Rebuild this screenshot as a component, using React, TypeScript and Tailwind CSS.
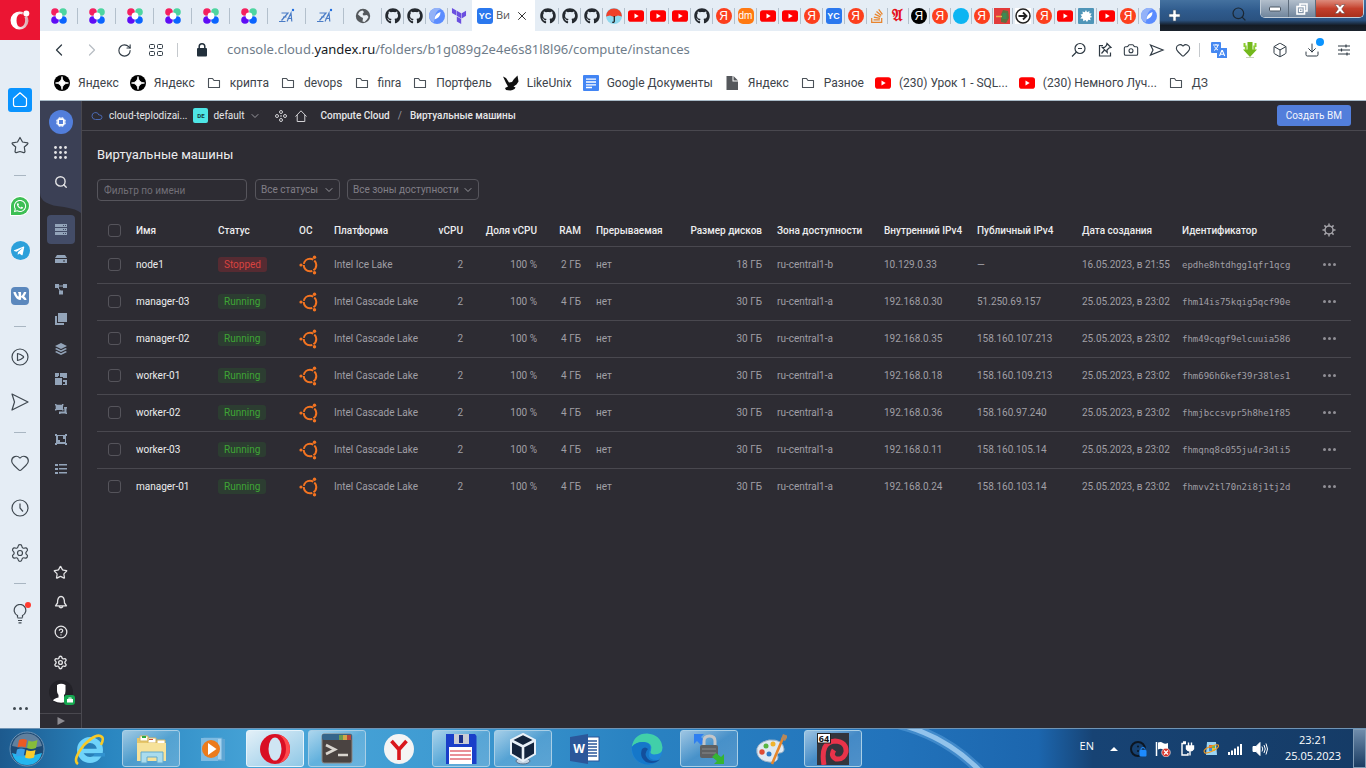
import { type ReactNode } from "react";
import {
  Box,
  Camera,
  ChevronDown,
  ChevronLeft,
  ChevronRight,
  CircleHelp,
  Cloud,
  Download,
  Heart,
  RotateCw,
  Search,
  Settings,
  Star,
  X,
} from "lucide-react";
import { FaGithub, FaStackOverflow, FaTelegramPlane, FaVk, FaWhatsapp } from "react-icons/fa";
import { SiTerraform } from "react-icons/si";

/* ---------- favicons ---------- */

function Clover() {
  return (
    <svg viewBox="0 0 16 16" className="size-4">
      <circle cx="4" cy="4" r="3.8" fill="#f5205f" />
      <circle cx="12" cy="4" r="3.8" fill="#4dd5a0" />
      <circle cx="4" cy="12" r="3.8" fill="#5f0df5" />
      <circle cx="12" cy="12" r="3.8" fill="#0a64ff" />
      <circle cx="8" cy="8" r="3.4" fill="#fff" />
    </svg>
  );
}

function LinesMark() {
  return (
    <svg viewBox="0 0 16 16" className="size-4" fill="none" stroke="#4a7cc6" strokeWidth="1.2">
      <path d="M2.500 5H9L2.500 12.500M0 13.500h6.500M4 9h3.500M8 13.500 12 5l.8 8.500M8.500 10.500h4" />
      <circle cx="14" cy="2" r="1.200" fill="#1f6de0" stroke="none" />
    </svg>
  );
}

function Globe() {
  return (
    <svg viewBox="0 0 16 16" className="size-4">
      <circle cx="8" cy="8" r="7.200" fill="#55595d" />
      <path d="M3 6.500Q4 3 7.500 2.500L9 4 7.500 6l1 1.500 3.500-.5 1.500 2-1.500 2.500-2.500 2.500-2-.5.500-3.500-2-1z" fill="#e9eef3" />
      <path d="M9.500 3.500 12 5l-1 1.200-1.700-.2z" fill="#55595d" />
    </svg>
  );
}

function PlayTube() {
  return (
    <svg viewBox="0 0 16 16" className="size-4">
      <rect y="2.300" width="16" height="11.400" rx="2.800" fill="#f00" />
      <path d="M6.500 5.600v4.800L10.700 8z" fill="#fff" />
    </svg>
  );
}

function YaCircle({ dark = false }: { dark?: boolean }) {
  return (
    <span className={`flex size-4 items-center justify-center rounded-full font-['Liberation_Sans',sans-serif] text-[12px] leading-4 text-white ${dark ? "bg-black" : "bg-[#fc3f1d]"}`}>
      Я
    </span>
  );
}

function YcSquare() {
  return (
    <span className="flex size-4 shrink-0 items-center justify-center rounded-[3px] bg-[#2b78ee] font-['Liberation_Sans',sans-serif] text-[9px] leading-4 font-bold text-white">
      YC
    </span>
  );
}

function Umbrella() {
  return (
    <svg viewBox="0 0 16 16" className="size-4">
      <circle cx="8" cy="8" r="8" fill="#8fd8ee" />
      <path d="M0 8.500a8 8 0 0 1 16 0l-4-1-4 1.500-4-1.500z" fill="#f0402a" />
      <path d="M8.300 8v5.200q-.2 1.600-2 1" stroke="#222" strokeWidth="1.300" fill="none" />
    </svg>
  );
}

function DmMark() {
  return (
    <span className="flex size-4 items-center justify-center rounded-[5px] bg-[#ff7a12] font-['Liberation_Sans',sans-serif] text-[10px] leading-4 text-white">dm</span>
  );
}

function BluePlanet() {
  return (
    <svg viewBox="0 0 16 16" className="size-4">
      <circle cx="8" cy="8" r="8" fill="#5a8cff" />
      <path d="M0 8a8 8 0 0 1 12-7Q5 3 5 14.500 0 12 0 8z" fill="#93b2f8" />
      <path d="M11.500 4Q11.500 9.500 5.500 11.500 5.500 6 11.500 4z" fill="#fff" />
    </svg>
  );
}

function Potion() {
  return (
    <svg viewBox="0 0 16 16" className="size-4">
      <rect width="16" height="16" fill="#e23b3b" />
      <path d="M7 6.500 9 2l5 1 1 7-3 5-5-1V10z" fill="#5f7040" />
      <path d="M8.500 5h4v6h-4z" fill="#3c8a55" />
      <path d="M2 8.500h6" stroke="#e8b34a" strokeWidth="1.500" />
    </svg>
  );
}

function ArrowDisc() {
  return (
    <svg viewBox="0 0 16 16" className="size-4" fill="none">
      <rect width="16" height="16" fill="#fff" />
      <circle cx="8" cy="8" r="7" stroke="#222" strokeWidth="1.500" />
      <path d="M3.500 8h8M8 4.500 11.500 8 8 11.500" stroke="#222" strokeWidth="1.800" />
    </svg>
  );
}

function Splash() {
  return (
    <svg viewBox="0 0 16 16" className="size-4">
      <rect width="16" height="16" rx="1" fill="#4f95b8" />
      <path d="m8 2 1 2.200L11.500 3l-.3 2.300 2.500.2-1.500 2 2 1.500-2.300.8.800 2.400-2.400-.4L9 14l-1.500-2-2.200 1.200L5 10.800l-2.800-.2L4 8.500 2.500 6.500l2.300-.5L4.500 3.500l2.300.8z" fill="#fff" />
    </svg>
  );
}

function Github() {
  return <FaGithub className="size-4 text-[#24292f]" />;
}

const pinnedWide: ReactNode[] = [
  <Clover />, <Clover />, <Clover />, <Clover />, <Clover />, <Clover />, <LinesMark />, <LinesMark />, <Globe />,
];

const pinnedNarrow: ReactNode[] = [
  <Github />, <Github />, <BluePlanet />, <SiTerraform className="size-4 text-[#6a4fe0]" />,
];

const openTabs: ReactNode[] = [
  <Github />, <Github />, <Github />, <Umbrella />, <PlayTube />, <PlayTube />, <PlayTube />, <Github />, <YaCircle />,
  <DmMark />, <PlayTube />, <PlayTube />, <YaCircle />, <YcSquare />, <YaCircle />,
  <FaStackOverflow className="size-4 text-[#e8842c]" />,
  <span className="font-['Liberation_Serif',serif] text-[16px] leading-4 font-bold text-[#e5101c]">𝔄</span>,
  <YaCircle dark />, <YaCircle />,
  <span className="block size-4 rounded-full bg-[#0cb5f2]" />,
  <YaCircle />, <Potion />, <ArrowDisc />, <YaCircle />, <PlayTube />, <Splash />, <PlayTube />, <YaCircle />, <BluePlanet />,
];

function TabStrip() {
  return (
    <div className="flex h-[31px] bg-[#e5edf5]">
      <div className="flex shrink-0 pt-px">
        {pinnedWide.map((icon, i) => (
          <button key={i} aria-label="Вкладка" className="flex w-[38px] items-center justify-center">
            <span className="flex h-4 w-full items-center justify-center border-r border-[#b3c0cc]">{icon}</span>
          </button>
        ))}
        {pinnedNarrow.map((icon, i) => (
          <button key={i} aria-label="Вкладка" className="flex w-[22px] items-center justify-center">
            <span className={`flex h-4 w-full items-center justify-center border-[#b3c0cc] ${i < 3 ? "border-r" : ""}`}>{icon}</span>
          </button>
        ))}
      </div>
      <div className="ml-0.5 flex w-[63px] shrink-0 items-center bg-white pl-[5px] text-[11px]">
        <YcSquare />
        <span className="ml-[3px] whitespace-nowrap text-[#555]">Ви</span>
        <button aria-label="Закрыть вкладку" className="mr-1.5 ml-auto">
          <X className="size-3.5 text-[#222]" strokeWidth={1.6} />
        </button>
      </div>
      <div className="ml-0.5 flex flex-1 pt-px">
        {openTabs.map((icon, i) => (
          <button key={i} aria-label="Вкладка" className={`flex items-center justify-center ${i < 15 ? "w-[22px] shrink-0" : "min-w-0 flex-1"}`}>
            <span className="flex h-4 w-full items-center justify-center border-r border-[#b3c0cc]">{icon}</span>
          </button>
        ))}
      </div>
      <div className="flex w-[206px] shrink-0 items-start bg-[linear-gradient(to_bottom,#44719f_0%,#2f5b8d_35%,#2b5280_65%,#141b24_82%,#1a222c_100%)]">
        <button aria-label="Новая вкладка" className="mt-[9px] ml-2 text-white">
          <svg viewBox="0 0 13 13" className="size-[13px]">
            <path d="M5 1h3v4h4v3H8v4H5V8H1V5h4z" fill="#fff" stroke="#4b5b6c" strokeWidth=".6" />
          </svg>
        </button>
        <button aria-label="Поиск вкладок" className="mt-1.5 ml-[50px]">
          <Search className="size-4 text-[#1b2733]" strokeWidth={1.8} />
        </button>
        <div className="ml-[13px] flex h-[18px] overflow-hidden rounded-b-[5px] border border-t-0 border-[#c3ced9]">
          <button aria-label="Свернуть" className="flex w-7 items-center justify-center border-r border-[#5d6c7c] bg-linear-to-b from-[#b3bfcc] to-[#71869d]">
            <svg viewBox="0 0 12 6" className="h-1.5 w-3"><rect x=".5" y="1" width="11" height="4" rx="1" fill="#fff" stroke="#4b5663" /></svg>
          </button>
          <button aria-label="Свернуть в окно" className="flex w-[27px] items-center justify-center border-r border-[#5d6c7c] bg-linear-to-b from-[#b3bfcc] to-[#71869d]">
            <svg viewBox="0 0 12 12" className="size-3" fill="none" stroke="#fff" strokeWidth="1.600"><path d="M4 3V1h7v7H9" /><rect x="1" y="3.500" width="7.500" height="7.500" /><rect x="3.500" y="6" width="2.500" height="2.500" strokeWidth="1" /></svg>
          </button>
          <button aria-label="Закрыть" className="flex w-[47px] items-center justify-center bg-linear-to-b from-[#dd8b7c] via-[#c4402c] to-[#a8301c]">
            <svg viewBox="0 0 12 10" className="h-2.5 w-3"><path d="M1 .5h3l2 2.300L8 .5h3L7.700 5 11 9.500H8L6 7.200 4 9.500H1L4.300 5z" fill="#fff" stroke="#5b3a3a" strokeWidth=".5" /></svg>
          </button>
        </div>
      </div>
    </div>
  );
}

function AddressBar() {
  const tool = "flex items-center justify-center";
  return (
    <div className="flex h-[38px] items-center bg-white text-[#2f3a44]">
      <button aria-label="Назад" className={`w-[38px] ${tool}`}><ChevronLeft className="size-5" strokeWidth={1.5} /></button>
      <button aria-label="Вперёд" className={`w-7 ${tool} text-[#b8bec4]`}><ChevronRight className="size-5" strokeWidth={1.5} /></button>
      <button aria-label="Обновить" className={`w-9 ${tool}`}><RotateCw className="size-[15px]" strokeWidth={1.8} /></button>
      <button aria-label="Экспресс-панель" className={`w-7 ${tool}`}>
        <svg viewBox="0 0 14 12" className="h-3 w-3.5" fill="none" stroke="currentColor"><rect x=".5" y=".5" width="5" height="4" rx="1" /><rect x="8.500" y=".5" width="5" height="4" rx="1" /><rect x=".5" y="7.500" width="5" height="4" rx="1" /><rect x="8.500" y="7.500" width="5" height="4" rx="1" /></svg>
      </button>
      <span className="ml-[7px] h-3.5 w-px bg-[#c5c9cd]" />
      <svg viewBox="0 0 10 14" className="ml-[19px] h-3.5 w-2.5"><rect y="5" width="10" height="8.500" rx="1" fill="#22303c" /><path d="M2.200 5.500V3.600a2.800 2.800 0 0 1 5.600 0v1.900" fill="none" stroke="#22303c" strokeWidth="1.500" /></svg>
      <div className="ml-5 flex-1 truncate font-['Noto_Sans',sans-serif] text-[13px] text-[#6f7d8a]">
        console.cloud.<span className="text-[#15191d]">yandex.ru</span>/folders/b1g089g2e4e6s81l8l96/compute/instances
      </div>
      <button aria-label="Масштаб" className={`w-[26px] ${tool}`}>
        <svg viewBox="0 0 16 16" className="size-4" fill="none" stroke="currentColor" strokeWidth="1.200"><circle cx="9" cy="6.500" r="5" /><path d="M7 6.500h4M5.500 10 1 14.500" /></svg>
      </button>
      <button aria-label="Закрепить" className={`w-[26px] ${tool}`}>
        <svg viewBox="0 0 16 16" className="size-4" fill="none" stroke="currentColor" strokeWidth="1.200"><path d="M6 3.500H2.500v10.500h11V10.500M10 1.500l4 4-2 .5-2 2 .2 2.300-5-5L7.500 5.500l2-2zM7.500 8 4.500 11.500" /></svg>
      </button>
      <button aria-label="Снимок" className={`w-[26px] ${tool}`}><Camera className="size-4" strokeWidth={1.6} /></button>
      <button aria-label="Мой поток" className={`w-[26px] ${tool}`}>
        <svg viewBox="0 0 16 16" className="size-4" fill="none" stroke="currentColor" strokeWidth="1.200"><path d="m1.500 3 12.500 5-12.500 5L4 8z" /></svg>
      </button>
      <button aria-label="В избранное" className={`w-[26px] ${tool}`}><Heart className="size-4" strokeWidth={1.6} /></button>
      <span className="ml-[3px] h-3.5 w-px bg-[#c5c9cd]" />
      <button aria-label="Перевести" className={`ml-[3px] w-[31px] ${tool}`}>
        <svg viewBox="0 0 16 16" className="size-4"><rect width="10" height="11" rx="1" fill="#4688f1" /><rect x="6" y="6" width="10" height="10" fill="#4688f1" /><path d="M2 3h6M5 2v1M3 8.500Q6.500 6.500 7 3M3.500 4.500Q4.500 7 7 8" stroke="#fff" strokeWidth="1" fill="none" /><path d="m8.500 14 2.300-5.500h.6L13.700 14M9.300 12.200h3.500" stroke="#fff" strokeWidth="1.100" fill="none" /></svg>
      </button>
      <button aria-label="Загрузчик" className={`w-[31px] ${tool}`}>
        <svg viewBox="0 0 16 16" className="size-4"><path d="M5.500 0h5v7.500h4.500L8 15 1 7.500h4.500z" fill="#73b81c" /><path d="M1.500 1h2v2.500h1.200V8H2.800V5H1.500zM14.500 1h-2v2.500h-1.200V8h1.900V5h1.300z" fill="#8ccc30" /><path d="M4 15.500h8" stroke="#c9d2bd" /></svg>
      </button>
      <button aria-label="Расширения" className={`w-[30px] ${tool}`}><Box className="size-4" strokeWidth={1.5} /></button>
      <button aria-label="Загрузки" className={`relative w-[34px] ${tool}`}>
        <Download className="size-4" strokeWidth={1.5} />
        <span className="absolute -top-1 right-[5px] size-2 rounded-full bg-[#0a94ff]" />
      </button>
      <button aria-label="Простая настройка" className={`mr-[7px] w-[30px] ${tool}`}>
        <svg viewBox="0 0 14 14" className="size-3.5" fill="none" stroke="currentColor" strokeWidth="1.200"><path d="M1 3h12M1 7h12M1 11h12M9 1.500v3M4.500 5.500v3M10 9.500v3" /></svg>
      </button>
    </div>
  );
}

function Spark() {
  return (
    <svg viewBox="0 0 16 16" className="size-4"><circle cx="8" cy="8" r="8" fill="#000" /><path d="M8 1.500Q8.400 7.600 14.500 8 8.400 8.400 8 14.500 7.600 8.400 1.500 8 7.600 7.600 8 1.500z" fill="#fff" stroke="#fff" strokeWidth=".8" /></svg>
  );
}

const folderIcon = (
  <svg viewBox="0 0 16 16" className="size-4" fill="none" stroke="#4a5158" strokeWidth="1.100"><path d="M2.500 3.500h4l1.500 2h5.500v7h-11z" strokeLinejoin="round" /></svg>
);

const bookmarks: { icon: ReactNode; label: string }[] = [
  { icon: <Spark />, label: "Яндекс" },
  { icon: <Spark />, label: "Яндекс" },
  { icon: folderIcon, label: "крипта" },
  { icon: folderIcon, label: "devops" },
  { icon: folderIcon, label: "finra" },
  { icon: folderIcon, label: "Портфель" },
  {
    icon: <svg viewBox="0 0 16 16" className="size-4"><path d="M0 1.500 3 3l3 4.500L9 7l2-3 3.500-3.500.5 3 .5 3-2 3-3 2 2 1-1 1.500L9.500 15l-2 .5L3 15l-1-2 3-1.500-2-3.500z" fill="#111" /></svg>,
    label: "LikeUnix",
  },
  {
    icon: <svg viewBox="0 0 16 16" className="size-4"><rect width="16" height="16" rx="1" fill="#4285f4" /><path d="M3 4.200h10M3 7h10M3 9.800h10M3 12.500h6" stroke="#fff" strokeWidth="1.300" /></svg>,
    label: "Google Документы",
  },
  {
    icon: <svg viewBox="0 0 16 16" className="size-4"><path d="M2.500 1h6v5.500H14V15H2.500zM9.500 1 14 5.500H9.500z" fill="#55585c" /></svg>,
    label: "Яндекс",
  },
  { icon: folderIcon, label: "Разное" },
  { icon: <PlayTube />, label: "(230) Урок 1 - SQL..." },
  { icon: <PlayTube />, label: "(230) Немного Луч..." },
  { icon: folderIcon, label: "ДЗ" },
];

function BookmarksBar() {
  return (
    <nav className="flex h-8 items-center gap-[11px] overflow-hidden border-b border-[#a9bbc8] bg-white pb-1 pl-3.5 font-['Roboto',sans-serif] text-[12px] whitespace-nowrap text-[#3d444b]">
      {bookmarks.map((b, i) => (
        <a key={i} href="#" className="flex shrink-0 items-center gap-2">
          {b.icon}
          {b.label}
        </a>
      ))}
    </nav>
  );
}

/* ---------- browser side rail ---------- */

function RailItem({ label, children }: { label: string; children: ReactNode }) {
  return (
    <button aria-label={label} className="flex h-[45px] w-10 shrink-0 items-center justify-center">
      {children}
    </button>
  );
}

function RailDivider() {
  return (
    <div className="flex h-4 w-10 shrink-0 items-center justify-center">
      <span className="h-px w-3 bg-[#a9b6c2]" />
    </div>
  );
}

function BrowserRail() {
  return (
    <aside className="flex w-10 shrink-0 flex-col bg-[#e5edf5] text-[#3f4850]">
      <button aria-label="Меню" className="mb-[37px] flex size-10 shrink-0 items-center justify-center bg-[#eb1533]">
        <svg viewBox="0 0 20 20" className="size-5">
          <defs>
            <linearGradient id="ring" x1="0" y1="0" x2="1" y2="0">
              <stop offset=".35" stopColor="#fff" />
              <stop offset="1" stopColor="#d8a3aa" />
            </linearGradient>
          </defs>
          <path d="M9.500 1.500a9 9 0 1 0 9 9.500q0-3-1.500-5l-2.500 1q1 1.500.5 5-1 4.500-4.500 5-4-.5-4-6.500t4-6.500l2 .5.500-2.500q-1.500-.5-3.500-.5z" fill="url(#ring)" />
          <circle cx="16.300" cy="3.500" r="3" fill="#fff" />
        </svg>
      </button>
      <RailItem label="Главная">
        <span className="flex size-6 items-center justify-center rounded-[3px] bg-[#0a94ff]">
          <svg viewBox="0 0 16 16" className="size-4" fill="none" stroke="#fff" strokeWidth="1.200" strokeLinejoin="round"><path d="M8 .8 14.500 6.500v6q0 2-2 2h-9q-2 0-2-2v-6z" /></svg>
        </span>
      </RailItem>
      <RailItem label="Закладки">
        <svg viewBox="0 0 18 18" className="size-[18px]" fill="none" stroke="currentColor" strokeWidth="1.200" strokeLinejoin="round"><path d="M9 1.500 11.500 6l5 .8q.8.6 0 1.400L13.300 11l.7 4.800q-.5 1-1.300.8L9 15.500l-3.700 1.100q-.8.200-1.300-.8L4.700 11 1.500 8.200q-.8-.8 0-1.400l5-.8z" /></svg>
      </RailItem>
      <RailDivider />
      <RailItem label="WhatsApp">
        <span className="flex size-[18px] items-center justify-center rounded-full rounded-bl-[3px] bg-[#3dbf55] ring-1 ring-white"><FaWhatsapp className="size-3.5 text-white" /></span>
      </RailItem>
      <RailItem label="Telegram">
        <span className="flex size-[19px] items-center justify-center rounded-full bg-[#2ca0da]"><FaTelegramPlane className="mr-0.5 size-3 text-white" /></span>
      </RailItem>
      <RailItem label="ВКонтакте">
        <span className="flex size-[18px] items-center justify-center rounded-[4px] bg-[#5b88bd]"><FaVk className="size-3.5 text-white" /></span>
      </RailItem>
      <RailDivider />
      <RailItem label="Плеер">
        <svg viewBox="0 0 18 18" className="size-[18px]" fill="none" stroke="currentColor" strokeWidth="1.200" strokeLinejoin="round"><circle cx="9" cy="9" r="8" /><path d="M6.500 5.500v7q3-.5 6-3v-1q-3-2.500-6-3z" /></svg>
      </RailItem>
      <RailItem label="Мой поток">
        <svg viewBox="0 0 18 18" className="size-[18px]" fill="none" stroke="currentColor" strokeWidth="1.200" strokeLinejoin="round"><path d="m1 1 16 8-16 8 2.500-8z" /></svg>
      </RailItem>
      <RailDivider />
      <RailItem label="Избранное"><Heart className="size-5" strokeWidth={1.4} /></RailItem>
      <RailItem label="История">
        <svg viewBox="0 0 18 18" className="size-[18px]" fill="none" stroke="currentColor" strokeWidth="1.200"><circle cx="9" cy="9" r="8" /><path d="M9 4.500V9l3 3.500" /></svg>
      </RailItem>
      <RailItem label="Настройки"><Settings className="size-5" strokeWidth={1.4} /></RailItem>
      <RailDivider />
      <RailItem label="Советы">
        <span className="relative">
          <svg viewBox="0 0 16 20" className="h-5 w-4" fill="none" stroke="currentColor" strokeWidth="1.200"><path d="M5.500 13.500v-2A5.800 5.800 0 1 1 10.500 11.500v2M5.500 14h5M6 16.500h4M6.500 18.800h3" /></svg>
          <span className="absolute -top-0.5 -right-[3px] size-1.5 rounded-full bg-[#ff3b30]" />
        </span>
      </RailItem>
      <button aria-label="Ещё" className="mt-auto flex h-10 items-center justify-center gap-[3px]">
        <span className="size-[3px] rounded-full bg-[#3f4850]" />
        <span className="size-[3px] rounded-full bg-[#3f4850]" />
        <span className="size-[3px] rounded-full bg-[#3f4850]" />
      </button>
    </aside>
  );
}

/* ---------- console sidebar ---------- */

const services: { label: string; art: ReactNode }[] = [
  { label: "Виртуальные машины", art: <path d="M0 1h12v3H0zM0 5h12v3H0zM0 9h12v3H0zM8 2h1v1H8zM10 2h1v1h-1zM8 6h1v1H8zM10 6h1v1h-1zM8 10h1v1H8zM10 10h1v1h-1z" fillRule="evenodd" /> },
  { label: "Диски", art: <path d="M2 2h8l2 3H0zM0 6h12v4H0zM8 7.500v1h2v-1z" fillRule="evenodd" /> },
  { label: "Группы", art: <><path d="M0 1h4v4H0zM8 1h4v4H8zM4 7.500h4v4H4z" /><path d="M3 3h6M2.500 4 6 9" stroke="currentColor" fill="none" /></> },
  { label: "Образы", art: <path d="M3 0h9v9H3zM0 3h2v7h7v2H0z" /> },
  { label: "Снимки", art: <path d="m6 0 6 3-6 3-6-3zM1.500 5 6 7.200 10.500 5l1.500 1-6 3-6-3zM1.500 8 6 10.200 10.500 8l1.500 1-6 3-6-3z" /> },
  { label: "Группы размещения", art: <path d="M0 0h4v3H3v1H0zM5 0h7v5H8V4H5zM0 5h7v7H0zM8 7h4v5H8v-1h2V9H8z" /> },
  { label: "Пулы", art: <path d="M0 1h1.500v.7H7V1h1.500v1.500H8V6h.5v1.500H7V7H1.500v.5H0V6h.7V2.500H0zM9 4h3v1.500h-.5v4h.5V11h-1.500v-.5h-5V11H4V8.500h5.500z" /> },
  { label: "Файловые хранилища", art: <path d="M0 1h2v1h8V1h2v2h-1v7h1v2h-2v-1H2v1H0v-2h1V3H0zM3 3v4h2v2h5V6H8V3z" fillRule="evenodd" /> },
  { label: "Операции", art: <path d="M0 1h3v2H0zM4 1h8v1.500H4zM0 5h3v2H0zM4 5h8v1.500H4zM0 9h3v2H0zM4 9h8v1.500H4z" /> },
];

function ConsoleSidebar() {
  const slot = "flex h-[30px] w-full shrink-0 items-center justify-center";
  return (
    <aside className="relative flex w-[42px] shrink-0 flex-col items-center border-r border-[#49484f] bg-[#2d2c33] pt-1.5 text-[#e4e4e6]">
      <svg viewBox="0 0 41 112" className="absolute top-0 left-0 h-28 w-[41px]" aria-hidden="true">
        <path d="M0 0h41v112Q37 108 24 106 0 104 0 92z" fill="#3b4055" />
      </svg>
      <a href="#" aria-label="Compute Cloud" className={`relative ${slot}`}>
        <span className="flex size-6 items-center justify-center rounded-full bg-[#527edb]">
          <svg viewBox="0 0 12 12" className="size-3" fill="none" stroke="#fff"><rect x="3.200" y="3.200" width="5.600" height="5.600" rx=".8" strokeWidth="1.700" /><path d="M4.300 1v2M6 1v2M7.700 1v2M4.300 9v2M6 9v2M7.700 9v2M1 4.300h2M1 6h2M1 7.700h2M9 4.300h2M9 6h2M9 7.700h2" strokeWidth=".8" /></svg>
        </span>
      </a>
      <button aria-label="Все сервисы" className={`relative ${slot}`}>
        <svg viewBox="0 0 13 13" className="size-[13px]" fill="currentColor">
          {[1.5, 6.5, 11.5].map((y) => [1.5, 6.5, 11.5].map((x) => <circle key={`${x}-${y}`} cx={x} cy={y} r="1.400" />))}
        </svg>
      </button>
      <button aria-label="Поиск" className={`relative ${slot}`}><Search className="size-3.5" strokeWidth={2.4} /></button>
      <nav className="mt-[17px] flex w-full flex-col items-center text-[#93a4b9]">
        {services.map((s, i) => (
          <a key={s.label} href="#" aria-label={s.label} className={slot}>
            <span className={`flex h-[29px] w-7 items-center justify-center rounded-[4px] ${i === 0 ? "bg-[#434c67]" : ""}`}>
              <svg viewBox="0 0 12 12" className="size-3" fill="currentColor">{s.art}</svg>
            </span>
          </a>
        ))}
      </nav>
      <div className="mt-auto flex w-full flex-col items-center pb-[6px]">
        <button aria-label="Избранное" className={slot}><Star className="size-[15px]" strokeWidth={2} /></button>
        <button aria-label="Уведомления" className={slot}>
          <svg viewBox="0 0 14 14" className="size-3.5" fill="none" stroke="currentColor" strokeWidth="1.300" strokeLinejoin="round"><path d="M1.500 10.800 3.500 8q0-6.500 3.500-6.500T10.500 8l2 2.800zM5 11.500q2 2.500 4 0" /></svg>
        </button>
        <button aria-label="Помощь" className={slot}><CircleHelp className="size-3.5" strokeWidth={2.2} /></button>
        <button aria-label="Настройки" className={slot}><Settings className="size-[15px]" strokeWidth={2.2} /></button>
        <button aria-label="Профиль" className={`relative ${slot}`}>
          <svg viewBox="0 0 24 24" className="size-6"><circle cx="12" cy="12" r="12" fill="#232228" /><path d="M8 5q4-2.500 8.500 0v6q0 3-1.500 4v2.500q4 1 3.500 3Q13 25 4 20.500q1-2 5.500-3V15Q8 13 8 11z" fill="#fff" /></svg>
          <span className="absolute right-[6px] bottom-[2px] flex h-[10px] w-[11px] items-center justify-center rounded-[3px] bg-[#15a850]">
            <svg viewBox="0 0 6 6" className="size-1.5" fill="#fff"><path d="M0 2h6v3.500H0zM1.500.5h3V2h-1v-.7h-1V2h-1z" /></svg>
          </span>
        </button>
      </div>
      <button aria-label="Развернуть меню" className="flex h-[15px] w-full shrink-0 items-center justify-center border-t border-[#49484f]">
        <svg viewBox="0 0 8 8" className="size-2"><path d="M.5 0 8 4 .5 8z" fill="#8d8c92" /></svg>
      </button>
    </aside>
  );
}

/* ---------- console page ---------- */

function ConsoleHeader() {
  return (
    <header className="flex h-[30px] items-center border-b border-[#49484f] pr-[15px] pl-[9px] text-[10px] text-[#e6e6e8]">
      <Cloud className="size-3 shrink-0 text-[#4a68b0]" strokeWidth={2} />
      <a href="#" className="ml-1.5 whitespace-nowrap">cloud-teplodizai...</a>
      <span className="ml-1.5 flex size-[15px] items-center justify-center rounded-[2px] bg-[#4ee6e6] text-[6px] font-bold text-[#153a3c]">DE</span>
      <button className="ml-[5px] flex items-center gap-1">
        default
        <ChevronDown className="size-3 text-[#a3a3a8]" strokeWidth={1.8} />
      </button>
      <svg viewBox="0 0 12 12" className="ml-[14px] size-3" fill="none" stroke="#d2d2d5" strokeWidth="1"><circle cx="6" cy="2" r="1.500" /><circle cx="2" cy="6" r="1.500" /><circle cx="10" cy="6" r="1.500" /><circle cx="6" cy="10" r="1.500" /><path d="M5 6h2" /></svg>
      <a href="#" aria-label="Каталог" className="ml-2">
        <svg viewBox="0 0 12 12" className="size-3" fill="none" stroke="#d2d2d5"><path d="M.5 6.500 6 .8l5.500 5.700M2.200 5v6.500h7.600V5" /></svg>
      </a>
      <a href="#" className="ml-3.5 font-medium">Compute Cloud</a>
      <span className="mx-2 text-[#9c9ba1]">/</span>
      <span className="font-medium">Виртуальные машины</span>
      <button className="ml-auto h-[21px] rounded-[3px] bg-[#527edb] px-[9px] text-[#f2f5fc]">Создать ВМ</button>
    </header>
  );
}

function FilterSelect({ id, label, className }: { id: string; label: string; className: string }) {
  return (
    <div className={`relative ${className}`}>
      <select id={id} aria-label={label} className="h-[21px] w-full appearance-none rounded-[4px] border border-[#56555c] bg-transparent pl-[5px] text-[#817f87]">
        <option>{label}</option>
      </select>
      <ChevronDown className="pointer-events-none absolute top-[5px] right-[5px] size-3 text-[#a3a3a8]" strokeWidth={1.8} />
    </div>
  );
}

type Vm = {
  name: string;
  running: boolean;
  platform: string;
  ram: string;
  disk: string;
  zone: string;
  local: string;
  pub: string;
  created: string;
  id: string;
};

const base = { running: true, platform: "Intel Cascade Lake", ram: "4 ГБ", disk: "30 ГБ", zone: "ru-central1-a", created: "25.05.2023, в 23:02" };

const vms: Vm[] = [
  { name: "node1", running: false, platform: "Intel Ice Lake", ram: "2 ГБ", disk: "18 ГБ", zone: "ru-central1-b", local: "10.129.0.33", pub: "—", created: "16.05.2023, в 21:55", id: "epdhe8htdhgg1qfr1qcg" },
  { ...base, name: "manager-03", local: "192.168.0.30", pub: "51.250.69.157", id: "fhm14is75kqig5qcf90e" },
  { ...base, name: "manager-02", local: "192.168.0.35", pub: "158.160.107.213", id: "fhm49cqgf9elcuuia586" },
  { ...base, name: "worker-01", local: "192.168.0.18", pub: "158.160.109.213", id: "fhm696h6kef39r38les1" },
  { ...base, name: "worker-02", local: "192.168.0.36", pub: "158.160.97.240", id: "fhmjbccsvpr5h8he1f85" },
  { ...base, name: "worker-03", local: "192.168.0.11", pub: "158.160.105.14", id: "fhmqnq8c055ju4r3dli5" },
  { ...base, name: "manager-01", local: "192.168.0.24", pub: "158.160.103.14", id: "fhmvv2tl70n2i8j1tj2d" },
];

function UbuntuMark() {
  return (
    <svg viewBox="0 0 20 20" className="size-5" role="img" aria-label="Ubuntu">
      <circle cx="11" cy="10" r="6.300" fill="none" stroke="#f47421" strokeWidth="2" strokeDasharray="12 1.195" strokeDashoffset="-7.200" />
      <circle cx="2" cy="10" r="1.600" fill="#f47421" />
      <circle cx="15.500" cy="2.200" r="1.700" fill="#f47421" />
      <circle cx="15.500" cy="17.800" r="1.700" fill="#f47421" />
    </svg>
  );
}

function Tick({ label }: { label: string }) {
  return <input type="checkbox" aria-label={label} className="ml-1 block size-[13px] appearance-none rounded-[3px] border border-[#55545b]" />;
}

function VmTable() {
  const cell = "pl-[7px] pr-2 text-left whitespace-nowrap";
  const num = "pl-[7px] pr-2 text-right whitespace-nowrap";
  return (
    <table className="mt-3.5 w-full table-fixed border-collapse text-[10px] text-[#a09fa5]">
      <colgroup>
        <col className="w-8" />
        <col className="w-[82px]" />
        <col className="w-[81px]" />
        <col className="w-[35px]" />
        <col className="w-[103px]" />
        <col className="w-[41px]" />
        <col className="w-[74px]" />
        <col className="w-[44px]" />
        <col className="w-[92px]" />
        <col className="w-[89px]" />
        <col className="w-[107px]" />
        <col className="w-[93px]" />
        <col className="w-[105px]" />
        <col className="w-[100px]" />
        <col className="w-[132px]" />
        <col className="w-[44px]" />
      </colgroup>
      <thead>
        <tr className="h-[31px] border-b border-[#49484f] text-[#ececee] *:font-medium">
          <th className={cell}><Tick label="Выбрать все" /></th>
          <th className={cell}>Имя</th>
          <th className={cell}>Статус</th>
          <th className={cell}>ОС</th>
          <th className={cell}>Платформа</th>
          <th className={num}>vCPU</th>
          <th className={num}>Доля vCPU</th>
          <th className={num}>RAM</th>
          <th className={cell}>Прерываемая</th>
          <th className={num}>Размер дисков</th>
          <th className={cell}>Зона доступности</th>
          <th className={cell}>Внутренний IPv4</th>
          <th className={cell}>Публичный IPv4</th>
          <th className={cell}>Дата создания</th>
          <th className={cell}>Идентификатор</th>
          <th>
            <button aria-label="Настроить столбцы" className="mx-auto block">
              <svg viewBox="0 0 14 14" className="size-3.5" fill="none" stroke="#a3a2a8" strokeWidth="1.500"><circle cx="7" cy="7" r="4" /><path d="M7 .5v2.500M7 11v2.500M.5 7H3M11 7h2.500M2.400 2.400l2 2M9.600 9.600l2 2M2.400 11.600l2-2M9.600 4.400l2-2" /></svg>
            </button>
          </th>
        </tr>
      </thead>
      <tbody>
        {vms.map((vm) => (
          <tr key={vm.name} className="h-[37px] border-b border-[#49484f] last:border-b-0">
            <td className={cell}><Tick label={vm.name} /></td>
            <td className={cell}><a href="#" className="text-[#ececee]">{vm.name}</a></td>
            <td className={cell}>
              <span className={`inline-block h-[15px] rounded-[3px] px-1.5 leading-[15px] ${vm.running ? "bg-[#2c3d31] text-[#3fa535]" : "bg-[#562b32] text-[#d84340]"}`}>
                {vm.running ? "Running" : "Stopped"}
              </span>
            </td>
            <td className={cell}><UbuntuMark /></td>
            <td className={cell}>{vm.platform}</td>
            <td className={num}>2</td>
            <td className={num}>100 %</td>
            <td className={num}>{vm.ram}</td>
            <td className={cell}>нет</td>
            <td className={num}>{vm.disk}</td>
            <td className={cell}>{vm.zone}</td>
            <td className={cell}>{vm.local}</td>
            <td className={cell}>{vm.pub}</td>
            <td className={cell}>{vm.created}</td>
            <td className={cell}><code className="font-['DejaVu_Sans_Mono',monospace] text-[9px]">{vm.id}</code></td>
            <td>
              <button aria-label={`Действия: ${vm.name}`} className="mx-auto flex h-5 items-center gap-0.5">
                <span className="size-[3px] rounded-full bg-[#908f96]" />
                <span className="size-[3px] rounded-full bg-[#908f96]" />
                <span className="size-[3px] rounded-full bg-[#908f96]" />
              </button>
            </td>
          </tr>
        ))}
      </tbody>
    </table>
  );
}

function ConsolePage() {
  return (
    <main className="min-w-0 flex-1 bg-[#2d2c33] font-['Roboto','Open_Sans',sans-serif]">
      <ConsoleHeader />
      <section className="px-[15px]">
        <h1 className="pt-3.5 text-[13px] leading-5 text-[#ececee]">Виртуальные машины</h1>
        <form className="mt-3.5 flex text-[10px]">
          <input aria-label="Фильтр по имени" placeholder="Фильтр по имени" className="mr-2 h-[22px] w-[150px] rounded-[4px] border border-[#56555c] bg-transparent px-1.5 text-[#e6e6e8] placeholder:text-[#716f77]" />
          <FilterSelect id="status" label="Все статусы" className="mr-[7px] w-[85px]" />
          <FilterSelect id="zone" label="Все зоны доступности" className="w-[132px]" />
        </form>
        <VmTable />
      </section>
    </main>
  );
}

/* ---------- taskbar ---------- */

const taskItems: { label: string; state: "idle" | "open" | "active"; art: ReactNode }[] = [
  {
    label: "Internet Explorer", state: "idle",
    art: <><circle cx="17" cy="17" r="10" fill="none" stroke="#6fd3fa" strokeWidth="6" /><path d="M9 18h19" stroke="#6fd3fa" strokeWidth="4.500" /><path d="M20 23.500h12V20H22z" fill="#3192cf" /><path d="M5 31Q-1 27 11 12 24-1 29 4q2 2-1 8" fill="none" stroke="#f7ca27" strokeWidth="2.600" /></>,
  },
  {
    label: "Проводник", state: "open",
    art: <><path d="M2 5h9l2 3h17v20H2z" fill="#e7c76a" /><path d="M5 3h8v5H5zM13 5h8v5h-8zM22 7h8v4h-8z" fill="#fff" stroke="#d6b65e" /><path d="M7 3h4v2H7z" fill="#2dab3f" /><path d="M14 6h4v1h-4z" fill="#d34a2f" /><path d="M2 10h29v18H2z" fill="#f6e29a" /><path d="M6 19h22v11h-6v-6H12v6H6z" fill="#a9dcee" stroke="#65aacb" /></>,
  },
  {
    label: "Проигрыватель", state: "idle",
    art: <><rect x="10" y="6" width="18" height="22" fill="#5fa5d3" /><rect x="7" y="5" width="18" height="22" fill="#a5d2ee" stroke="#5fa5d3" /><rect x="4" y="5" width="17" height="23" fill="#7ebbe2" /><circle cx="14" cy="16" r="9" fill="#ec7b1c" /><path d="m11 10 8.500 6-8.500 6z" fill="#fff" /></>,
  },
  {
    label: "Opera", state: "active",
    art: <><ellipse cx="16" cy="16" rx="15" ry="15" fill="#d90f24" /><path d="M20 1.800Q31 5 31 16T20 30.200Q27 25 27 16T20 1.800z" fill="#ff4a4d" /><ellipse cx="16" cy="16" rx="6.500" ry="11.500" fill="#cfe5f3" /></>,
  },
  {
    label: "Терминал", state: "open",
    art: <><rect x="1" y="1" width="30" height="29" rx="2" fill="#4a4341" stroke="#8b8783" /><rect x="1" y="1" width="30" height="6" rx="2" fill="#35658a" /><path d="M18 2h4v5h-4z" fill="#6b9a4f" /><path d="M22 2h4v5h-4z" fill="#d0a64a" /><path d="M26 2h4v5h-4z" fill="#b8453a" /><path d="m5 12 9 4.500L5 21M17 22h10" stroke="#d9d5cf" strokeWidth="2.600" fill="none" /></>,
  },
  {
    label: "Яндекс Браузер", state: "idle",
    art: <><circle cx="16" cy="16" r="15" fill="#f4f4f4" /><path d="m8.500 8 7.500 8.500L23.500 8M16 16v11" stroke="#d9161c" strokeWidth="3.600" fill="none" /></>,
  },
  {
    label: "Total Commander", state: "open",
    art: <><path d="M1 1h29l1.500 2v28H1z" fill="#1a3fc9" /><rect x="9" y="1" width="15" height="10" fill="#c9ccd4" /><rect x="14" y="2" width="4" height="8" fill="#1a2f8a" /><rect x="4" y="14" width="23" height="17" fill="#fff" /><path d="M5 18h21M5 22h21M5 26h21" stroke="#d3232e" strokeWidth="1.200" /></>,
  },
  {
    label: "VirtualBox", state: "open",
    art: <><ellipse cx="16" cy="28" rx="7" ry="3" fill="#c3d2e2" stroke="#56708c" /><path d="m16 1 12 6v14l-12 7L4 21V7z" fill="#13243d" stroke="#e8f0f8" strokeWidth="2" /><path d="m4.500 7.500 11.500 6 11.500-6M16 13.500V27" stroke="#e8f0f8" strokeWidth="2.600" fill="none" /></>,
  },
  {
    label: "Word", state: "idle",
    art: <><rect x="16" y="4" width="14" height="24" fill="#fff" stroke="#2b579a" /><path d="M18 8h10M18 11h10M18 14h10M18 17h10M18 20h10M18 23h10" stroke="#2b579a" strokeWidth="1.300" /><path d="M1 4 19 1v30L1 28z" fill="#2b579a" /><text x="10" y="20" textAnchor="middle" fontSize="12" fontWeight="700" fill="#fff">W</text></>,
  },
  {
    label: "Edge", state: "idle",
    art: <><circle cx="16" cy="16" r="15.500" fill="#1f86d8" /><path d="M.8 14Q3 .5 16 .5q14 1 15.500 14 0 7-8.500 7-5-.5-3-4 2-8-7-8.500Q5 9 .8 14z" fill="#41cfa9" /><path d="M.8 14Q5 8.500 13 9q7 1 6 7-5 12 9 11-6 6-14 4.200Q1 28 .8 14z" fill="#1577c9" /><path d="M11 16q-3 8 4 13 8 3 14-2.500-10 4-13.500-2.500Q13 20 17 16q-3-3-6 0z" fill="#134f9c" /></>,
  },
  {
    label: "WinSCP", state: "open",
    art: <><path d="M1 1h10L8 4l4 4-4 4-4-4-3 3z" fill="#2f7ff0" /><path d="M11 13V8q0-5 5.500-5T22 8v5" fill="none" stroke="#c4c6c8" strokeWidth="3" /><rect x="7" y="12" width="18" height="13" rx="2" fill="#5e6062" /><path d="M9 16h14M9 20h14" stroke="#87898b" /><path d="M31 31H21l3-3-5-4 4-4 5 4 3-3z" fill="#34b532" /></>,
  },
  {
    label: "Paint", state: "idle",
    art: <><path d="M2 20Q0 10 14 7q14-1 15 9 0 4-5 4-3 1-1 4 0 6-9 5Q4 28 2 20z" fill="#dfe9f2" stroke="#9fb4c8" /><circle cx="7" cy="19" r="2.700" fill="#de4b35" /><circle cx="11" cy="13" r="2.500" fill="#58b543" /><circle cx="18" cy="11" r="2.500" fill="#f0b32d" /><circle cx="14" cy="21" r="2.500" fill="#2c7bc9" /><path d="m17 31 11-26" stroke="#e6862b" strokeWidth="2.600" /><path d="m26 6 2-5 5 2-3 5z" fill="#b5885a" /></>,
  },
  {
    label: "x64dbg", state: "open",
    art: <><rect width="32" height="32" fill="#33353d" /><path d="M7 32Q3 9 18 8q12 1 11 11-2 8-10 7-6-3-2-9" fill="none" stroke="#e8334a" strokeWidth="5" /><rect x=".5" y=".5" width="13" height="9.500" fill="#fff" stroke="#222" /><text x="7" y="8.500" textAnchor="middle" fontSize="9" fontWeight="700" fill="#111">64</text></>,
  },
];

function Taskbar() {
  return (
    <footer className="relative flex h-10 shrink-0 overflow-hidden border-t border-[#6f94b5] bg-[linear-gradient(to_right,#1d5a8e_0%,#2a86c0_8%,#49a6d9_20%,#3f9bd2_32%,#2a83c2_46%,#2273bb_65%,#1c66ae_76%,#174374_80%,#153b66_100%)] text-white">
      <svg viewBox="0 0 200 40" className="absolute top-0 left-[860px] h-10 w-[200px]" fill="none" aria-hidden="true">
        <path d="M34-6q52 12 88 50" stroke="#7fbdf0" strokeWidth="10" opacity=".35" />
        <path d="M34-6q52 12 88 50" stroke="#b5dcfa" strokeWidth="5" opacity=".7" />
      </svg>
      <button aria-label="Пуск" className="relative flex w-[54px] items-center justify-center">
        <svg viewBox="0 0 36 36" className="size-9">
          <circle cx="18" cy="18" r="17" fill="#1c4a75" stroke="#6d93b5" />
          <path d="M3 22q15 5 30 0-3 12-15 12T3 22z" fill="#23b6ef" />
          <path d="M3 15Q6 3 18 2.500 30 3 33 15q-15 4-30 0z" fill="#fff" opacity=".3" />
          <path d="M10 9q4-2 8 0l-1.500 7.500q-4-2-8 0z" fill="#ea5a24" />
          <path d="M19.500 9.500q4 2 9-.5L27 17q-5 2-9 0z" fill="#86bd3a" />
          <path d="M8 18.500q4-2 8 0L14.500 26q-4-2-8 0z" fill="#3aa0e8" />
          <path d="M17.500 19q4 2 9 0L25 26.500q-5 2-9 0z" fill="#fbcb2c" />
        </svg>
      </button>
      <div className="relative ml-1.5 flex gap-1 py-px">
        {taskItems.map((t) => (
          <button
            key={t.label}
            aria-label={t.label}
            className={`flex w-[58px] items-center justify-center rounded-[3px] border ${
              t.state === "active"
                ? "border-[#e5f3fb] bg-linear-to-br from-[#e3f0f8] to-[#8fc8e6]"
                : t.state === "open"
                  ? "border-[#a9cfe6] bg-linear-to-br from-white/55 via-white/15 to-white/20"
                  : "border-transparent"
            }`}
          >
            <svg viewBox="0 0 32 32" className="size-8">{t.art}</svg>
          </button>
        ))}
      </div>
      <div className="relative ml-auto flex items-center">
        <span className="mr-4 pb-1 text-[11px]">EN</span>
        <svg viewBox="0 0 8 4" className="mr-3 h-1 w-2"><path d="m0 4 4-4 4 4z" fill="#fff" /></svg>
        <svg viewBox="0 0 17 16" className="mr-2 h-4 w-[17px]"><circle cx="8" cy="8" r="7" fill="none" stroke="#0c1622" strokeWidth="2" /><circle cx="8" cy="5.500" r="1" fill="#0c1622" /><circle cx="8" cy="10" r="1" fill="#0c1622" /><rect x="9.500" y="9" width="7" height="6.500" rx="1" fill="#1d8bff" /><path d="M11 9V8q0-1.500 2-1.500T15 8v1" stroke="#1d8bff" fill="none" /></svg>
        <svg viewBox="0 0 16 16" className="mr-2 size-4"><path d="M1.500 1v14" stroke="#fff" strokeWidth="1.500" /><path d="M3 1.500q3-1 5 .5t5 0V9q-3 1-5-.5T3 8.500z" fill="#fff" /><circle cx="11" cy="11.500" r="4.300" fill="#d8352b" stroke="#fff" strokeWidth=".6" /><path d="m9 9.500 4 4m0-4-4 4" stroke="#fff" strokeWidth="1.300" /></svg>
        <svg viewBox="0 0 16 16" className="mr-2 size-4" fill="none" stroke="#fff" strokeWidth="1.400"><path d="M7 2.500H3V14h6v-2M4 1h3" /><path d="M7.500 5h7v3q-1 2-3.500 2T7.500 8zM9.500 4.500v-3M12.500 4.500v-3M11 10v4.500" fill="#fff" /></svg>
        <svg viewBox="0 0 16 16" className="mr-2 size-4"><path d="M4 1h9l1 13H3z" fill="#9bd4f3" /><path d="M6 4h3v3H6z" fill="#e9602c" /><path d="M9 4h3v3H9z" fill="#74b843" /><path d="M6 7h3v3H6z" fill="#3a8fd8" /><path d="M9 7h3v3H9z" fill="#f1c232" /><path d="M2 12Q-1 9 6 6q10-4 9.500-1 0 2-6 5-5 2.500-7.500 2" fill="none" stroke="#f29b1f" strokeWidth="1.100" /></svg>
        <svg viewBox="0 0 16 16" className="mr-[9px] size-4" fill="#fff"><path d="M1 11h2v3H1zM4 9.500h2V14H4zM7 7.500h2V14H7zM10 5.500h2V14h-2zM13 3h2v11h-2z" /></svg>
        <svg viewBox="0 0 16 16" className="size-4" fill="none" stroke="#fff"><path d="M1 5.500h3l4-4v13l-4-4H1z" fill="#fff" /><path d="M10 5.500q1.500 2.500 0 5M12 4q2.500 4 0 8M14 2.500q3 5.500 0 11" /></svg>
        <time className="ml-[17px] w-[56px] pb-px text-center text-[11px] leading-4">
          23:21
          <br />
          25.05.2023
        </time>
        <button aria-label="Показать рабочий стол" className="ml-3 h-[39px] w-[13px] border border-[#7f9bb5] bg-linear-to-b from-[#6f8cab] to-[#1a3d63]" />
      </div>
    </footer>
  );
}

export default function App() {
  return (
    <div className="flex min-h-screen flex-col font-['Open_Sans',sans-serif]">
      <div className="flex flex-1">
        <BrowserRail />
        <div className="flex min-w-0 flex-1 flex-col">
          <TabStrip />
          <AddressBar />
          <BookmarksBar />
          <div className="flex flex-1">
            <ConsoleSidebar />
            <ConsolePage />
          </div>
        </div>
      </div>
      <Taskbar />
    </div>
  );
}
